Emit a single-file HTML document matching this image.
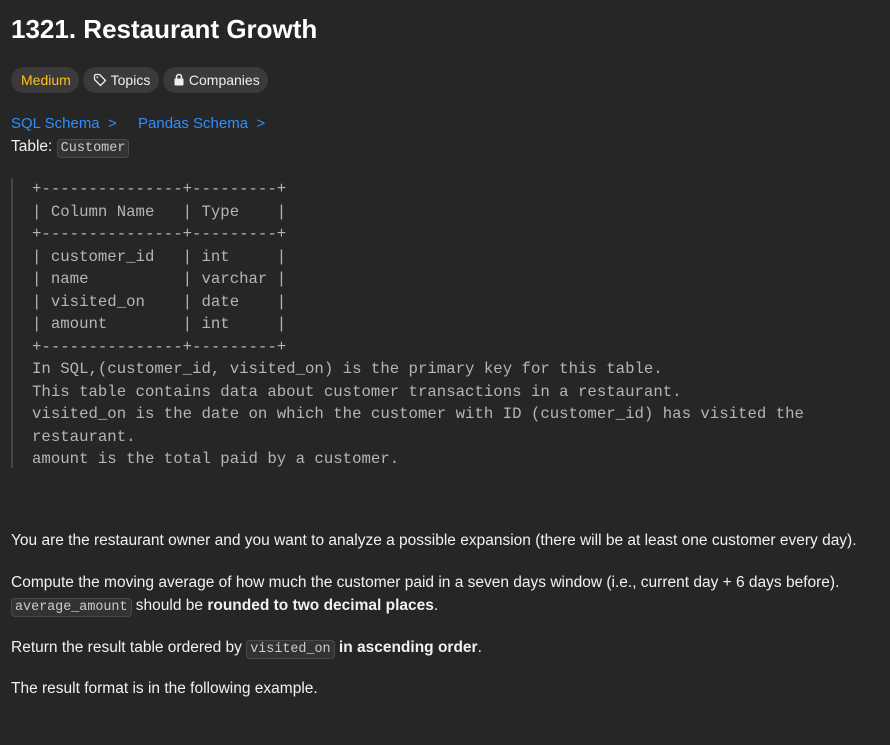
<!DOCTYPE html>
<html><head><meta charset="utf-8"><style>
body{margin:0;background:#262626;width:890px;height:745px;overflow:hidden;font-family:"Liberation Sans",sans-serif;color:#eff1f6;}
.t{position:absolute;white-space:nowrap}
h1{position:absolute;left:11px;top:14px;margin:0;font-size:26px;font-weight:bold;color:#fff}
.pill{position:absolute;top:67px;height:26px;border-radius:13px;background:#3a3a3a;font-size:14px;line-height:26px;color:#eee;padding:0 10px;box-sizing:border-box;white-space:nowrap}
.link{color:#2e8eff;font-size:15px}
code{font-family:"Liberation Mono",monospace;font-size:13.4px;background:#333;border:1px solid #4a4a4a;border-radius:4px;padding:1px 3px;color:#ccc}
pre{position:absolute;left:11px;top:178px;margin:0;border-left:2px solid #444;padding-left:19px;font-family:"Liberation Mono",monospace;font-size:15.7px;line-height:22.5px;color:#b5b5b5;height:290px}
p{position:absolute;left:11px;margin:0;font-size:15.5px;white-space:nowrap}
</style></head><body>
<h1>1321. Restaurant Growth</h1>
<div class="pill" style="left:11px;width:68px;color:#ffc01e">Medium</div>
<div class="pill" style="left:83px;width:76px;padding-left:10px"><svg width="14" height="14" viewBox="0 0 14 14" style="vertical-align:-2px"><path d="M1.5 2.5v4l6 6 5-5-6-6h-4z" fill="none" stroke="#eee" stroke-width="1.3" stroke-linejoin="round"/><circle cx="4.3" cy="4.3" r="0.9" fill="#eee"/></svg> Topics</div>
<div class="pill" style="left:163px;width:105px"><svg width="12" height="13" viewBox="0 0 12 13" style="vertical-align:-1px"><rect x="1.5" y="5.5" width="9" height="7" rx="1" fill="#eee"/><path d="M3.5 6V4a2.5 2.5 0 0 1 5 0v2" fill="none" stroke="#eee" stroke-width="1.6"/></svg> Companies</div>
<div class="t link" style="left:11px;top:115px">SQL Schema &nbsp;&gt;</div>
<div class="t link" style="left:138px;top:115px">Pandas Schema &nbsp;&gt;</div>
<div class="t" style="left:11px;top:138px;font-size:15.5px">Table: <code style="font-size:13.5px">Customer</code></div>
<pre>+---------------+---------+
| Column Name   | Type    |
+---------------+---------+
| customer_id   | int     |
| name          | varchar |
| visited_on    | date    |
| amount        | int     |
+---------------+---------+
In SQL,(customer_id, visited_on) is the primary key for this table.
This table contains data about customer transactions in a restaurant.
visited_on is the date on which the customer with ID (customer_id) has visited the
restaurant.
amount is the total paid by a customer.</pre>
<p style="top:532px">You are the restaurant owner and you want to analyze a possible expansion (there will be at least one customer every day).</p>
<p style="top:574px">Compute the moving average of how much the customer paid in a seven days window (i.e., current day + 6 days before).</p>
<p style="top:597px"><code>average_amount</code> should be <b>rounded to two decimal places</b>.</p>
<p style="top:639px">Return the result table ordered by <code>visited_on</code> <b>in ascending order</b>.</p>
<p style="top:680px">The result format is in the following example.</p>
</body></html>
